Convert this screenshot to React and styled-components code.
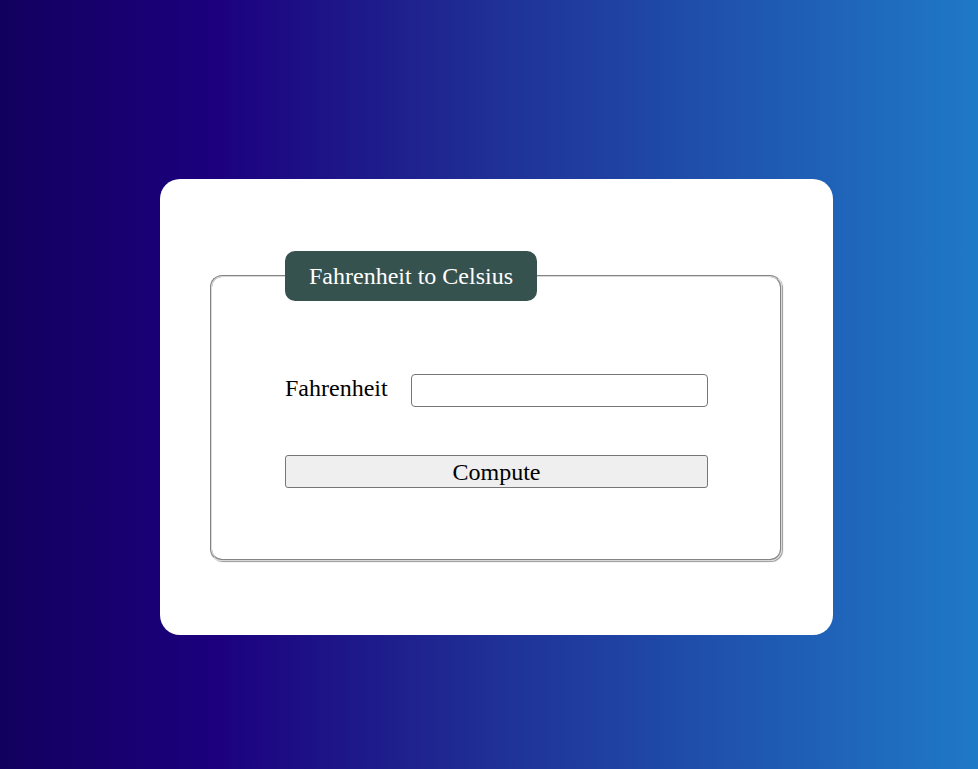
import React, { useState } from 'react';
import styled, { createGlobalStyle } from 'styled-components';

const GlobalStyle = createGlobalStyle`
  html, body {
    margin: 0;
    padding: 0;
  }
  body {
    font-family: "Liberation Serif", "Times New Roman", serif;
  }
`;

// --- layout ---

const Page = styled.div`
  min-height: 100vh;
  box-sizing: border-box;
  padding: 179px 0 0 160px;
  background: linear-gradient(90deg, #12005e 0%, #1c007e 22%, #1f2f95 50%, #1f79c7 100%);
`;

const Card = styled.div`
  width: 673px;
  box-sizing: border-box;
  padding: 72px 51px 74px 50px;
  background: #ffffff;
  border-radius: 20px;
`;

const Fieldset = styled.fieldset`
  margin: 0;
  padding: 0 72px 71px 73px;
  border: 2px groove #d8d8d8;
  border-radius: 12px;
  box-shadow: 1px 1px 1px #9a9a9a;
`;

const Legend = styled.legend`
  padding: 11px 24px;
  background: #36524f;
  color: #ffffff;
  font-size: 24px;
  line-height: 28px;
  border-radius: 10px;
`;

const Form = styled.div`
  display: flex;
  flex-direction: column;
  gap: 48px;
  padding-top: 73px;
`;

const Row = styled.div`
  display: flex;
  align-items: center;
`;

const Label = styled.label`
  width: 126px;
  flex: none;
  font-size: 24px;
  line-height: 28px;
  color: #000;
  margin-bottom: 5px;
`;

const Input = styled.input`
  flex: 1;
  height: 33px;
  box-sizing: border-box;
  border: 1px solid #767676;
  border-radius: 4px;
  font-family: inherit;
  font-size: 20px;
  padding: 0 6px;
  outline: none;
`;

const Button = styled.button`
  width: 100%;
  height: 33px;
  box-sizing: border-box;
  border: 1px solid #767676;
  border-radius: 3px;
  background: #efefef;
  color: #000;
  font-family: inherit;
  font-size: 24px;
  line-height: 28px;
  padding: 0;
  cursor: pointer;
`;

export default function App() {
  const [fahrenheit, setFahrenheit] = useState('');

  return (
    <>
      <GlobalStyle />
      <Page>
        <Card>
          <Fieldset>
            <Legend>Fahrenheit to Celsius</Legend>
            <Form>
              <Row>
                <Label htmlFor="fahrenheit">Fahrenheit</Label>
                <Input
                  id="fahrenheit"
                  value={fahrenheit}
                  onChange={(e) => setFahrenheit(e.target.value)}
                />
              </Row>
              <Button type="button">Compute</Button>
            </Form>
          </Fieldset>
        </Card>
      </Page>
    </>
  );
}
